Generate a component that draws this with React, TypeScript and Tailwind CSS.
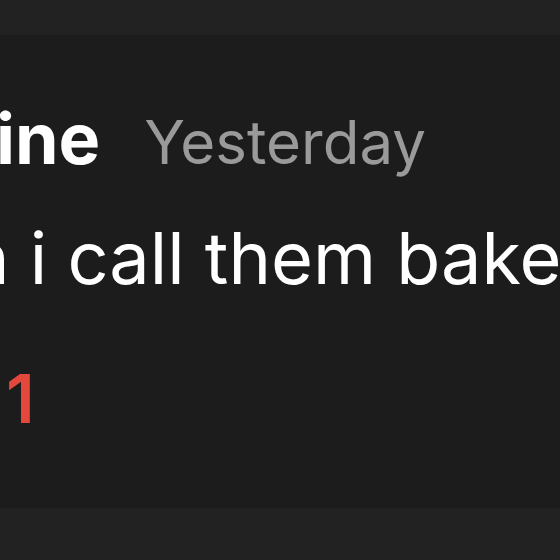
export default function App() {
  return (
    <div className="w-[560px] h-[560px] overflow-hidden bg-[#1c1c1c] flex flex-col" style={{ fontFamily: "Inter, 'Noto Sans', sans-serif" }}>
      <div className="h-[35px] bg-[#222222] shrink-0" />
      <div className="flex-1 flex flex-col overflow-hidden">
        <div className="flex items-baseline gap-[44px] mt-[69px] whitespace-nowrap leading-none">
          <span className="text-[70px] font-bold text-white -ml-[4px]">ine</span>
          <span className="text-[60px] text-[#9a9a9a]">Yesterday</span>
        </div>
        <div className="mt-[48px] text-[72px] leading-none text-white whitespace-nowrap -ml-[33px]">
          n i call them bakes
        </div>
        <div className="mt-[70px] pl-[6px] text-[68px] font-semibold leading-none text-[#e4483c]">1</div>
      </div>
      <div className="h-[52px] bg-[#222222] shrink-0" />
    </div>
  );
}
